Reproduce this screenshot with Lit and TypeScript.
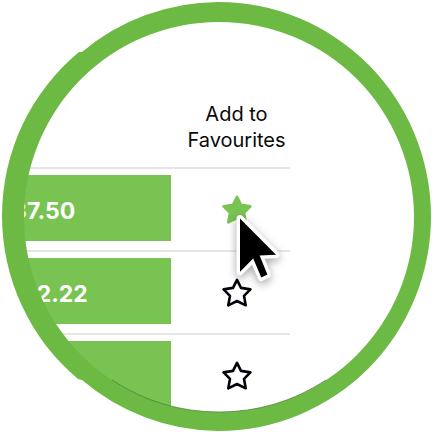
import { LitElement, html, css } from "lit";
import { customElement, property, state } from "lit/decorators.js";
import { classMap } from "lit/directives/class-map.js";

interface Row {
  price: string;
  favourite: boolean;
}

@customElement("star-toggle")
export class StarToggle extends LitElement {
  @property({ type: Boolean }) active = false;
  @property() label = "";

  static styles = css`
    :host {
      display: inline-flex;
    }
    .star {
      display: flex;
      padding: 0;
      border: 0;
      background: none;
      cursor: pointer;
    }
    .shape {
      fill: none;
      stroke: #000008;
      stroke-width: 2.6;
      stroke-linejoin: round;
    }
    .on .shape {
      fill: #79c352;
      stroke: #79c352;
    }
  `;

  render() {
    return html`
      <button
        class=${classMap({ star: true, on: this.active })}
        aria-label=${this.label}
        aria-pressed=${this.active ? "true" : "false"}
      >
        <svg width="30" height="30" viewBox="0 0 30 30" aria-hidden="true">
          <path
            class="shape"
            d="M15 1.8 L19 9.9 L28.4 11.4 L22 17.8 L23.7 27.3 L15 23 L6.3 27.3 L8 17.8 L1.6 11.4 L11 9.9 Z"
          />
        </svg>
      </button>
    `;
  }
}

@customElement("app-root")
export class AppRoot extends LitElement {
  @state() private rows: Row[] = [
    { price: "$37.50", favourite: true },
    { price: "$152.22", favourite: false },
    { price: "", favourite: false },
  ];

  static styles = css`
    :host {
      display: block;
      background: #fff;
      color: #0a0a0a;
      font-family: Inter, "Liberation Sans", sans-serif;
    }
    .lens {
      display: grid;
      aspect-ratio: 1;
      overflow: hidden;
    }
    .view,
    .ring {
      grid-area: 1 / 1;
      min-width: 0;
      min-height: 0;
    }
    .view {
      margin: 20px 16px 18px 22px;
      border-radius: 50%;
      overflow: hidden;
    }
    .ring {
      width: 100%;
      height: 100%;
      pointer-events: none;
      z-index: 1;
    }
    .band {
      fill: #6cb944;
      fill-rule: evenodd;
    }
    .edge {
      fill: none;
      stroke: #4c7a35;
      stroke-width: 0.7;
    }
    .prices {
      width: 268px;
      border-collapse: separate;
      border-spacing: 0;
      table-layout: fixed;
    }
    .amount-col {
      width: 149px;
    }
    th {
      height: 65px;
      padding: 81px 0 1px 12px;
      font-size: 20px;
      line-height: 26px;
      font-weight: 400;
      text-align: center;
      vertical-align: top;
    }
    th:first-child {
      padding: 0;
    }
    td {
      padding: 6px 0 9px;
      border-top: 2px solid #e6e6e6;
    }
    .bar {
      display: flex;
      align-items: center;
      justify-content: flex-start;
      box-sizing: border-box;
      height: 66px;
      padding-top: 6px;
      background: #79c352;
      color: #fff;
      font-size: 23px;
      line-height: 28px;
      font-weight: 700;
    }
    .price {
      margin-left: -25px;
    }
    .pick {
      position: relative;
      display: flex;
      align-items: center;
      justify-content: center;
      box-sizing: border-box;
      height: 66px;
      padding: 4px 0 0 12px;
    }
    .pointer {
      position: absolute;
      left: 59px;
      top: 33px;
      z-index: 1;
      filter: drop-shadow(0 3px 4px rgba(0, 0, 0, 0.35));
      overflow: visible;
      pointer-events: none;
    }
    .halo {
      fill: #fff;
      stroke: #fff;
      stroke-width: 7;
      stroke-linejoin: round;
    }
  `;

  private pointer() {
    const arrow = "M10 10.5 L46 46.7 L29.6 47.5 L37.4 66.6 L31.3 69.6 L23.2 50.6 L10 63.8 Z";
    return html`
      <svg class="pointer" width="52" height="76" viewBox="0 0 52 76" aria-hidden="true">
        <path class="halo" d=${arrow} />
        <path d=${arrow} />
      </svg>
    `;
  }

  render() {
    return html`
      <main class="lens">
        <div class="view">
          <table class="prices">
            <colgroup>
              <col class="amount-col" />
              <col />
            </colgroup>
            <thead>
              <tr>
                <th></th>
                <th scope="col">Add to<br />Favourites</th>
              </tr>
            </thead>
            <tbody>
              ${this.rows.map(
                (row, i) => html`
                  <tr>
                    <td><div class="bar"><span class="price">${row.price}</span></div></td>
                    <td>
                      <div class="pick">
                        <star-toggle ?active=${row.favourite} label="Add to favourites"></star-toggle>
                        ${i === 0 ? this.pointer() : null}
                      </div>
                    </td>
                  </tr>
                `
              )}
            </tbody>
          </table>
        </div>
        <svg class="ring" viewBox="0 0 432 432" aria-hidden="true">
          <path
            class="band"
            d="M82 52 A213 213 0 0 1 218 2 A213 214.5 0 0 1 431 216.5 A213 214.5 0 0 1 218 431 A213 213 0 0 1 82 380 L78 379 A213 213 0 0 1 79 52 Z
               M24 217 A195 195 0 0 0 414 217 A195 195 0 0 0 24 217 Z"
          />
          <path class="edge" d="M112 380 A195 195 0 0 0 219 412 A195 195 0 0 0 326 380" />
        </svg>
      </main>
    `;
  }
}
